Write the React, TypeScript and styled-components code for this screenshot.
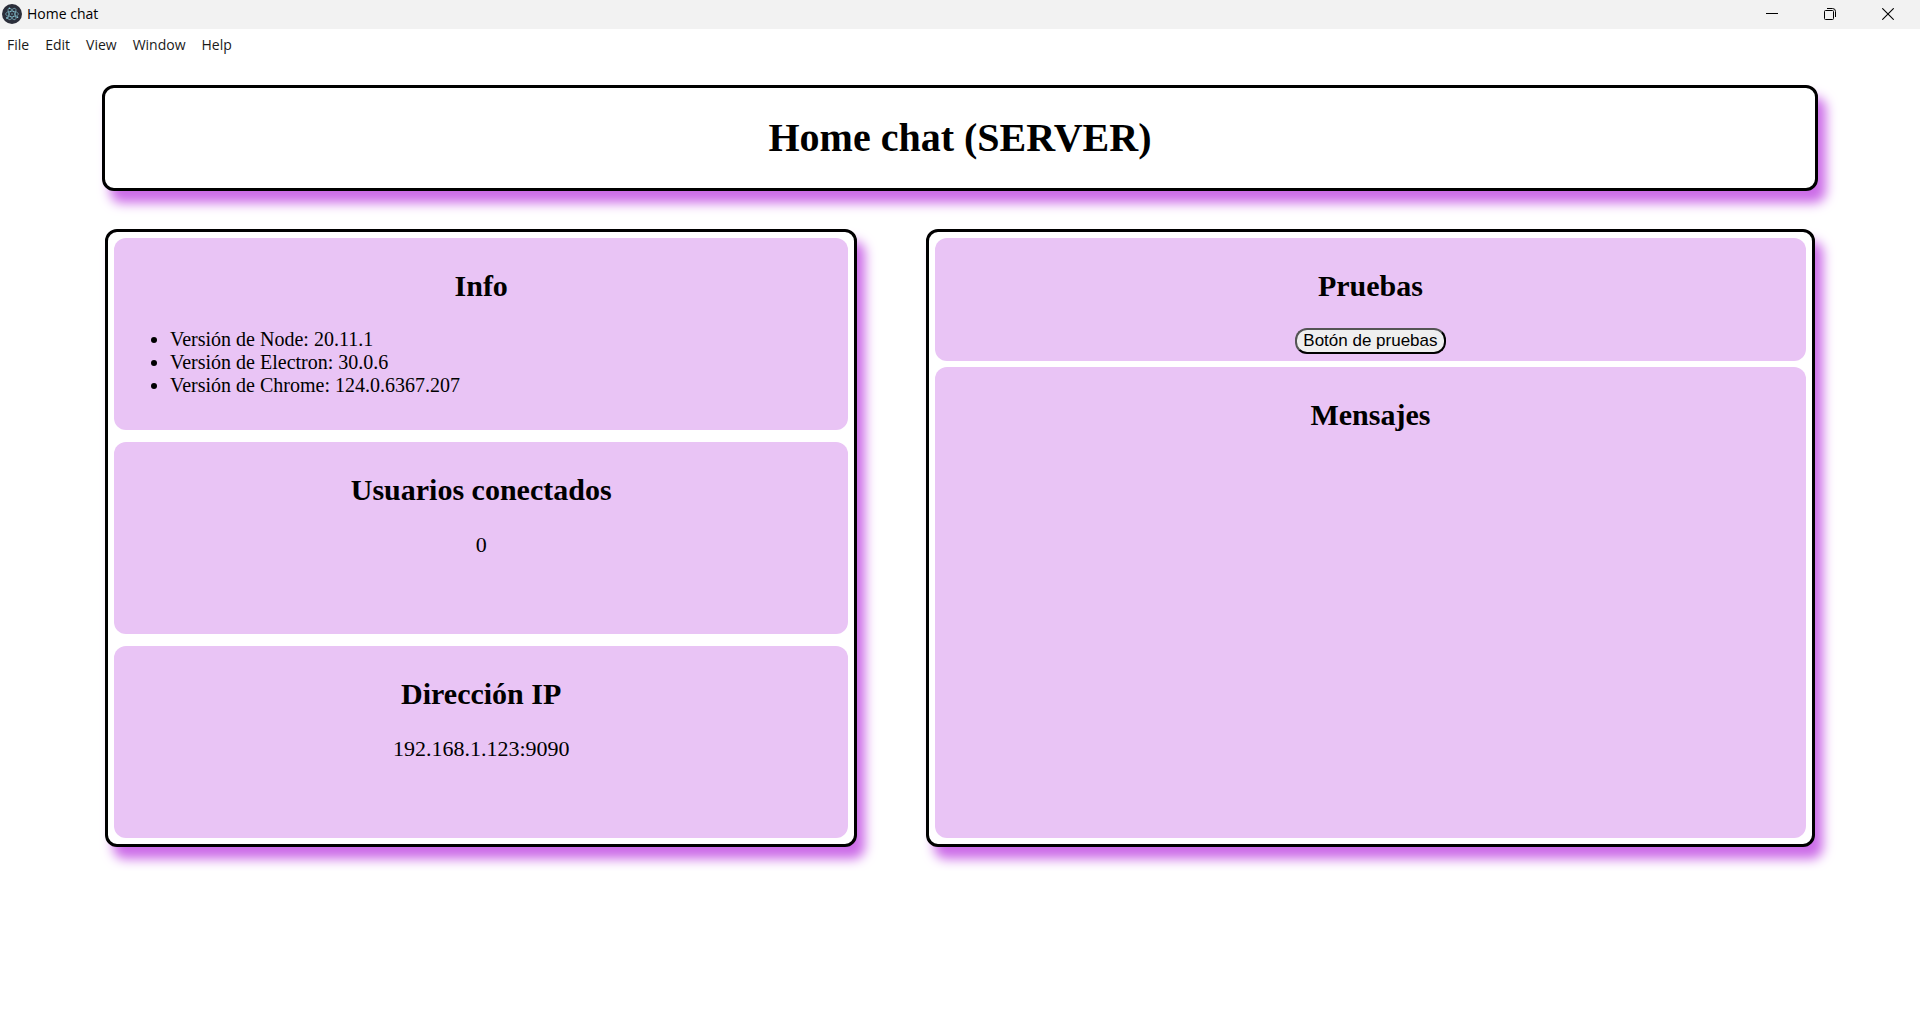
import React from "react";
import styled, { createGlobalStyle } from "styled-components";

const GlobalStyle = createGlobalStyle`
  *, *::before, *::after { box-sizing: border-box; }
  body {
    margin: 0;
    background: #fff;
    color: #000;
    font-family: "Liberation Serif", "Times New Roman", serif;
    font-size: 20px;
  }
`;

const uiFont = `"Open Sans", "Segoe UI", sans-serif`;

const TitleBar = styled.header`
  display: flex;
  align-items: center;
  justify-content: space-between;
  height: 29px;
  padding: 0 3px 1px 2px;
  background: #f2f2f2;
  font-family: ${uiFont};
  font-size: 14px;
  line-height: 20px;
`;

const AppName = styled.div`
  display: flex;
  align-items: center;
  gap: 5px;
`;

const WindowControls = styled.div`
  display: flex;
  height: 100%;
`;

const ControlButton = styled.button`
  display: flex;
  align-items: center;
  justify-content: center;
  width: 58px;
  padding: 0;
  border: 0;
  background: transparent;
  color: #000;

  &:hover {
    background: #e2e2e2;
  }
`;

const MenuBar = styled.nav`
  display: flex;
  align-items: center;
  height: 32px;
  font-family: ${uiFont};
`;

const MenuButton = styled.button`
  padding: 0 8px;
  border: 0;
  background: transparent;
  color: #1a1a1a;
  font: inherit;
  font-size: 14px;
  line-height: 20px;

  &:first-child {
    padding-left: 7px;
  }
`;

const Page = styled.main`
  padding: 24px 102px;
`;

const Frame = styled.div`
  border: 3px solid #000;
  border-radius: 12px;
  background: #fff;
  box-shadow: 8px 12px 12px #cc6ce8;
`;

const Banner = styled(Frame)`
  padding: 27px;
  text-align: center;
`;

const PageTitle = styled.h1`
  margin: 0;
  font-size: 40px;
  line-height: 46px;
`;

const Columns = styled.div`
  display: grid;
  grid-template-columns: 44% 52%;
  justify-content: space-between;
  margin: 38px 3px 0;
`;

const Panel = styled(Frame)<{ $gap: number }>`
  display: flex;
  flex-direction: column;
  gap: ${(p) => p.$gap}px;
  padding: 6px;
`;

const Card = styled.section<{ $minHeight?: number; $grow?: boolean }>`
  flex: ${(p) => (p.$grow ? "1" : "none")};
  min-height: ${(p) => p.$minHeight ?? 0}px;
  padding: 6px;
  border-radius: 12px;
  background: #e9c4f5;
  text-align: center;
`;

const CardTitle = styled.h2`
  margin: 25px 0;
  font-size: 30px;
  line-height: 34px;
`;

const VersionList = styled.ul`
  margin: 0;
  padding-left: 50px;
  text-align: left;
  line-height: 23px;
`;

const Value = styled.p`
  margin: 0;
  font-size: 22px;
  line-height: 25px;
`;

const TestButton = styled.button`
  display: block;
  height: 26px;
  margin: 0 auto 1px;
  padding: 0 6px;
  border: 2px outset #000;
  border-radius: 12px;
  background: #efefef;
  color: #000;
  font-family: "Liberation Sans", Arial, sans-serif;
  font-size: 17px;
  line-height: 20px;
`;

const AppIcon = () => (
  <svg width="20" height="20" viewBox="0 0 20 20" aria-hidden="true">
    <circle cx="10" cy="10" r="10" fill="#2b2e3a" />
    <g fill="none" stroke="#9feaf9" strokeOpacity="0.6" strokeWidth="0.8">
      <ellipse cx="10" cy="10" rx="6.4" ry="2.7" />
      <ellipse cx="10" cy="10" rx="6.4" ry="2.7" transform="rotate(60 10 10)" />
      <ellipse cx="10" cy="10" rx="6.4" ry="2.7" transform="rotate(120 10 10)" />
    </g>
    <g fill="#9feaf9" fillOpacity="0.8">
      <circle cx="10" cy="10" r="0.7" />
      <circle cx="5" cy="14" r="0.9" />
      <circle cx="15.4" cy="13.2" r="0.9" />
      <circle cx="7.4" cy="4.2" r="0.8" />
    </g>
  </svg>
);

const MinimizeIcon = () => (
  <svg width="12" height="12" viewBox="0 0 12 12" aria-hidden="true">
    <path d="M0 5.5h12" stroke="currentColor" />
  </svg>
);

const RestoreIcon = () => (
  <svg width="12" height="12" viewBox="0 0 12 12" fill="none" stroke="currentColor" aria-hidden="true">
    <rect x="0.5" y="2.5" width="9" height="9" rx="1" />
    <path d="M3 0.5h5.5a3 3 0 0 1 3 3V9" />
  </svg>
);

const CloseIcon = () => (
  <svg width="12" height="12" viewBox="0 0 12 12" aria-hidden="true">
    <path d="M0.3 0.3l11.4 11.4M11.7 0.3L0.3 11.7" stroke="currentColor" strokeWidth="1.1" />
  </svg>
);

const menus = ["File", "Edit", "View", "Window", "Help"];

const versions = [
  { name: "Node", version: "20.11.1" },
  { name: "Electron", version: "30.0.6" },
  { name: "Chrome", version: "124.0.6367.207" },
];

export default function App() {
  return (
    <>
      <GlobalStyle />
      <TitleBar>
        <AppName>
          <AppIcon />
          <span>Home chat</span>
        </AppName>
        <WindowControls>
          <ControlButton aria-label="Minimize"><MinimizeIcon /></ControlButton>
          <ControlButton aria-label="Restore"><RestoreIcon /></ControlButton>
          <ControlButton aria-label="Close"><CloseIcon /></ControlButton>
        </WindowControls>
      </TitleBar>
      <MenuBar>
        {menus.map((name) => (
          <MenuButton key={name}>{name}</MenuButton>
        ))}
      </MenuBar>
      <Page>
        <Banner>
          <PageTitle>Home chat (SERVER)</PageTitle>
        </Banner>
        <Columns>
          <Panel $gap={12}>
            <Card $minHeight={192}>
              <CardTitle>Info</CardTitle>
              <VersionList>
                {versions.map((v) => (
                  <li key={v.name}>Versión de {v.name}: {v.version}</li>
                ))}
              </VersionList>
            </Card>
            <Card $minHeight={192}>
              <CardTitle>Usuarios conectados</CardTitle>
              <Value>0</Value>
            </Card>
            <Card $minHeight={192}>
              <CardTitle>Dirección IP</CardTitle>
              <Value>192.168.1.123:9090</Value>
            </Card>
          </Panel>
          <Panel $gap={6}>
            <Card>
              <CardTitle>Pruebas</CardTitle>
              <TestButton>Botón de pruebas</TestButton>
            </Card>
            <Card $grow>
              <CardTitle>Mensajes</CardTitle>
            </Card>
          </Panel>
        </Columns>
      </Page>
    </>
  );
}
